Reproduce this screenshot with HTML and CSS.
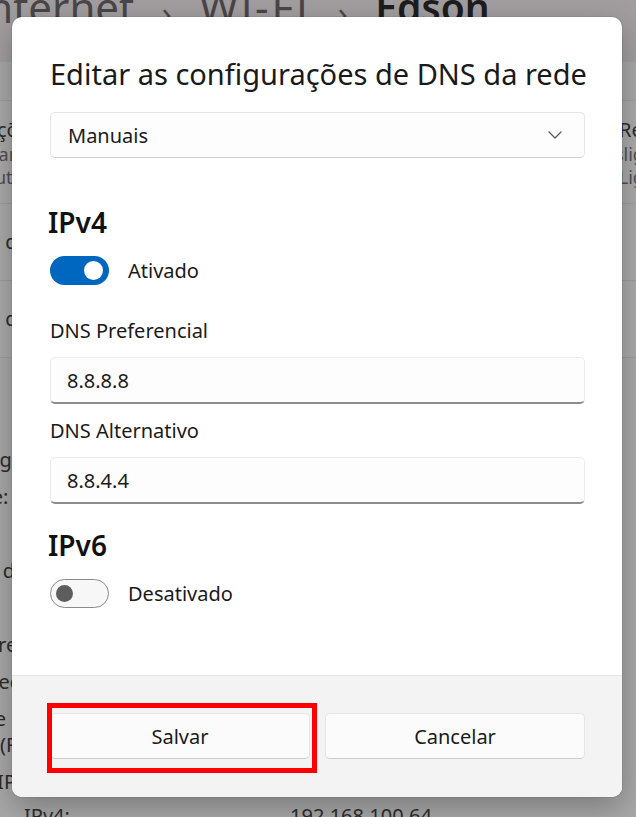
FILE: index.html
```html
<!DOCTYPE html>
<html lang="pt-BR">
<head>
<meta charset="utf-8">
<title>Editar as configurações de DNS da rede</title>
<link rel="stylesheet" href="styles.css">
</head>
<body>
<div class="backdrop">
  <header class="crumbs">
    <span class="crumb">Internet</span><span class="sep">›</span><span class="crumb wifi">Wi-Fi</span><span class="sep">›</span><span class="crumb current">Edson</span>
  </header>
  <div class="cards">
    <div class="card tall">
      <div class="row"><span class="lbl">Configurações de conexão</span><span class="val">Redes</span></div>
      <div class="row sub"><span class="lbl">Compartilhar conexão medida</span><span class="val">Desligado</span></div>
      <div class="row sub"><span class="lbl">Conectar automaticamente</span><span class="val">Ligado</span></div>
    </div>
    <div class="card"><div class="row"><span class="lbl">Atribuição de IP:</span></div></div>
    <div class="card"><div class="row"><span class="lbl">Atribuição de DNS:</span></div></div>
  </div>
  <div class="props">
    <div class="prow"><span class="lbl">Protocolo:</span></div>
    <div class="prow"><span class="lbl">Tipo de segurança:</span></div>
    <div class="prow"><span class="lbl">Fabricante:</span></div>
    <div class="prow"><span class="lbl">Descrição:</span></div>
    <div class="prow"><span class="lbl">Versão do driver:</span></div>
    <div class="prow"><span class="lbl"></span></div>
    <div class="prow"><span class="lbl">Banda de rede:</span></div>
    <div class="prow"><span class="lbl">Canal de rede:</span></div>
    <div class="prow wrap"><span class="lbl">Velocidade de conexão<br>(Recepção/Transmissão):</span></div>
    <div class="prow"><span class="lbl">Endereço IPv6:</span></div>
    <div class="prow ip"><span class="ipl">IPv4:</span><span class="ipv">192.168.100.64</span></div>
  </div>
</div>

<div class="dialog" role="dialog" aria-labelledby="dlg-title">
  <div class="dialog-body">
    <h1 id="dlg-title" class="title">Editar as configurações de DNS da rede</h1>
    <div class="combo">
      <span>Manuais</span>
      <svg class="chev" width="14" height="8" viewBox="0 0 14 8"><path d="M1 1 L7 7 L13 1" fill="none" stroke="#5a5a5a" stroke-width="1.3" stroke-linecap="round" stroke-linejoin="round"/></svg>
    </div>

    <h2 class="section">IPv4</h2>
    <div class="toggle-row">
      <span class="toggle on"><span class="knob"></span></span>
      <span class="toggle-label">Ativado</span>
    </div>

    <label class="field-label">DNS Preferencial</label>
    <div class="textbox">8.8.8.8</div>
    <label class="field-label second">DNS Alternativo</label>
    <div class="textbox">8.8.4.4</div>

    <h2 class="section v6">IPv6</h2>
    <div class="toggle-row">
      <span class="toggle off"><span class="knob"></span></span>
      <span class="toggle-label">Desativado</span>
    </div>
  </div>
  <div class="dialog-footer">
    <div class="btn-wrap">
      <button class="btn">Salvar</button>
      <span class="highlight"></span>
    </div>
    <div class="btn-wrap">
      <button class="btn">Cancelar</button>
    </div>
  </div>
</div>
</body>
</html>
```
FILE: styles.css
```css
* { box-sizing: border-box; }
html, body { margin: 0; padding: 0; }
body {
  width: 636px;
  height: 817px;
  overflow: hidden;
  position: relative;
  background: #a8a8a8;
  font-family: "Noto Sans", "Open Sans", sans-serif;
  color: #1b1b1b;
}

/* ---------- dimmed settings page behind ---------- */
.backdrop { width: 636px; height: 817px; overflow: hidden; }
.crumbs {
  background: #a29e9f;
  display: flex;
  align-items: flex-start;
  margin-left: -27px;
  margin-top: -14px;
  height: 76px;
  font-size: 42px;
  line-height: 42px;
  white-space: nowrap;
  color: #4a4647;
}
.crumb.wifi { letter-spacing: 3px; }
.crumb.current { color: #1e1c1d; font-weight: 600; font-size: 39px; }
.sep { width: 65px; flex: none; text-align: center; font-size: 32px; color: #4a4647; padding-top: 6px; }
.cards { margin-top: 38px; border-top: 1px solid #9d9d9d; }
.card {
  height: 77px;
  border-bottom: 1px solid #9d9d9d;
  background: #aaaaaa;
  display: flex;
  flex-direction: column;
  justify-content: center;
}
.card.tall { height: 103px; justify-content: flex-start; padding-top: 16px; }
.row {
  display: flex;
  justify-content: space-between;
  font-size: 20px;
  line-height: 26px;
  color: #2c2c2c;
  white-space: nowrap;
}
.row.sub { font-size: 18px; line-height: 23px; color: #505050; }
.lbl { margin-left: -96px; }
.val { margin-right: -40px; }
.props { padding-top: 52px; font-size: 20px; color: #2c2c2c; }
.prow { height: 37px; line-height: 26px; white-space: nowrap; }
.prow.wrap { height: 63px; }
.prow.ip { display: flex; height: 30px; margin-top: -3px; }
.ipl { margin-left: 24px; width: 266px; }
.ipv { color: #2c2c2c; }

/* ---------- dialog ---------- */
.dialog {
  position: absolute;
  left: 12px;
  top: 17px;
  width: 610px;
  height: 780px;
  background: #ffffff;
  border-radius: 10px;
  box-shadow: 0 10px 30px rgba(0,0,0,0.28), 0 0 0 1px rgba(0,0,0,0.06);
  display: flex;
  flex-direction: column;
  overflow: hidden;
}
.dialog-body {
  flex: 1;
  padding: 39px 37px 0 38px;
}
.title {
  margin: 0;
  font-size: 29px;
  line-height: 36px;
  font-weight: 400;
  color: #1a1a1a;
  white-space: nowrap;
}
.combo {
  margin-top: 20px;
  height: 46px;
  border: 1px solid #e6e6e6;
  border-bottom-color: #cfcfcf;
  border-radius: 5px;
  background: #fdfdfd;
  display: flex;
  align-items: center;
  justify-content: space-between;
  padding: 0 22px 0 17px;
  font-size: 20px;
  color: #1a1a1a;
}
.chev { display: block; }
.section {
  margin: 44px 0 0 -2px;
  font-size: 28px;
  line-height: 40px;
  font-weight: 600;
  color: #111;
}
.section.v6 { margin-top: 21px; }
.toggle-row {
  margin-top: 14px;
  display: flex;
  align-items: center;
  gap: 19px;
  height: 29px;
}
.toggle {
  width: 59px;
  height: 29px;
  border-radius: 15px;
  position: relative;
  display: flex;
  align-items: center;
  flex: none;
}
.toggle.on { background: #0067c0; justify-content: flex-end; padding-right: 6px; }
.toggle.on .knob { width: 19px; height: 19px; border-radius: 50%; background: #fff; }
.toggle.off { background: #f7f7f7; border: 1.5px solid #8a8a8a; padding-left: 5px; }
.toggle.off .knob { width: 17px; height: 17px; border-radius: 50%; background: #5d5d5d; }
.toggle-label { font-size: 20px; color: #1a1a1a; }
.field-label {
  display: block;
  margin-top: 32px;
  font-size: 20px;
  line-height: 28px;
  color: #1a1a1a;
}
.field-label.second { margin-top: 13px; }
.textbox {
  margin-top: 12px;
  height: 47px;
  border: 1px solid #ececec;
  border-bottom: 2px solid #8c8c8c;
  border-radius: 5px;
  background: #fdfdfd;
  display: flex;
  align-items: center;
  padding-left: 16px;
  font-size: 20px;
  color: #1a1a1a;
}
.dialog-footer {
  height: 122px;
  background: #f3f3f3;
  border-top: 1px solid #e5e5e5;
  display: grid;
  grid-template-columns: 1fr 1fr;
  gap: 15px;
  padding: 37px 37px 0 38px;
  align-items: start;
}
.btn-wrap { position: relative; }
.btn {
  width: 100%;
  height: 46px;
  border: 1px solid #e5e5e5;
  border-bottom-color: #cccccc;
  border-radius: 5px;
  background: #fbfbfb;
  font-family: inherit;
  font-size: 20px;
  color: #1a1a1a;
  display: block;
}
.highlight {
  position: absolute;
  left: -3px;
  top: -10px;
  width: 270px;
  height: 70px;
  border: 5px solid #ff0000;
  pointer-events: none;
}
```
